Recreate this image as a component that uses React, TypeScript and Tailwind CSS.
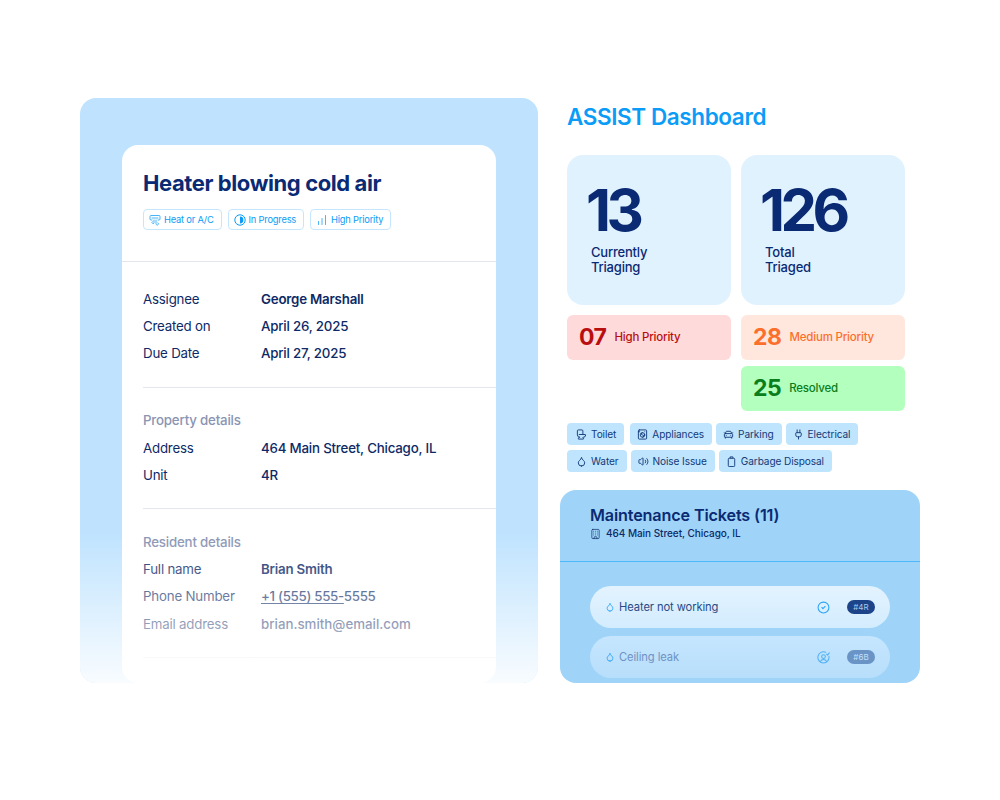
import { AirVent, Building, CarFront, ChartNoAxesColumnIncreasing, CircleCheck, Droplet, Plug, Toilet, Volume2, WashingMachine } from "lucide-react";
import type { ReactNode } from "react";

const font = { fontFamily: '"Inter", "Noto Sans", sans-serif' };

const HalfCircle = () => (
  <svg viewBox="0 0 12 12" className="h-[12px] w-[12px]" fill="none">
    <circle cx="6" cy="6" r="5.2" stroke="#0b9cf7" strokeWidth="1" />
    <path d="M6 2.6a3.4 3.4 0 0 1 0 6.8z" fill="#0b9cf7" />
  </svg>
);

const Bin = ({ className }: { className: string }) => (
  <svg viewBox="0 0 12 12" className={className} fill="none" stroke="currentColor" strokeWidth="1">
    <rect x="2.5" y="2.5" width="7" height="9" rx="1" />
    <path d="M4.5 2.5V1h3v1.5" />
  </svg>
);

const TargetUser = ({ className }: { className: string }) => (
  <svg viewBox="0 0 14 14" className={className} fill="none" stroke="currentColor" strokeWidth="1.1" strokeLinecap="round" strokeLinejoin="round">
    <path d="M9.4 1.4A6 6 0 1 0 12.8 5.6" />
    <circle cx="7" cy="6" r="2" />
    <path d="M3.6 11.4c.6-1.5 1.9-2.3 3.4-2.3s2.8.8 3.4 2.3" />
    <path d="M10.3 3.4l1.1 1 1.8-2.4" />
  </svg>
);

const Pill = ({ icon, label }: { icon: ReactNode; label: string }) => (
  <div className="flex h-[21px] items-center gap-[3px] rounded-[4px] border border-[#c6e6fd] bg-white pl-[5px] pr-[7px] text-[9.3px] tracking-[-0.2px] text-[#0b9cf7]">
    {icon}
    <span>{label}</span>
  </div>
);

const Row = ({ label, value, bold }: { label: string; value: ReactNode; bold?: boolean }) => (
  <div className="flex h-[27.3px] items-center text-[13.3px] tracking-[-0.2px] text-[#0d2a66]">
    <span className="w-[118px] shrink-0">{label}</span>
    <span className={bold ? "font-semibold" : "font-medium"}>{value}</span>
  </div>
);

const Stat = ({ num, line1, line2 }: { num: string; line1: string; line2: string }) => (
  <div className="h-[150px] w-[164px] rounded-[16px] bg-[#e1f2ff] pl-[19px] pt-[20px] text-[#0a2a73]">
    <div className="text-[58px] font-bold leading-[70px] tracking-[-4.5px]">{num}</div>
    <div className="ml-[5px] text-[13px] font-medium leading-[15px] tracking-[-0.2px]">
      {line1}
      <br />
      {line2}
    </div>
  </div>
);

const Tally = ({ num, label, cls, gap }: { num: string; label: string; cls: string; gap: string }) => (
  <div className={`flex h-[45px] w-[164px] items-center rounded-[6px] pl-[12px] ${cls}`}>
    <span className="text-[23px] font-bold tracking-[-0.5px]">{num}</span>
    <span className={`text-[11.5px] font-medium tracking-[-0.2px] ${gap}`}>{label}</span>
  </div>
);

const Tag = ({ icon, label, cls = "" }: { icon: ReactNode; label: string; cls?: string }) => (
  <div className={`flex h-[22px] items-center gap-[4px] rounded-[4px] bg-[#bfe4fd] pl-[7px] pr-[8px] text-[10.1px] tracking-[-0.1px] text-[#123a7a] ${cls}`}>
    {icon}
    <span className="translate-y-[0.5px]">{label}</span>
  </div>
);

const tagIcon = "h-[11px] w-[11px] text-[#123a7a]";

const Ticket = ({ title, badge, icon, cls, text, badgeCls }: { title: string; badge: string; icon: ReactNode; cls: string; text: string; badgeCls: string }) => (
  <div className={`flex h-[42px] items-center rounded-[21px] pl-[15px] pr-[15px] ${cls}`}>
    <Droplet className="h-[10px] w-[10px] text-[#2aa4f8]" />
    <span className={`ml-[4px] text-[11.2px] tracking-[-0.1px] ${text}`}>{title}</span>
    <span className="ml-auto flex">{icon}</span>
    <span className={`ml-[17px] flex h-[14px] w-[28px] items-center justify-center rounded-full text-[8px] ${badgeCls}`}>{badge}</span>
  </div>
);

export default function App() {
  return (
    <div className="flex h-[800px] w-[1000px] bg-white pl-[80px] pt-[98px]" style={font}>
      {/* left ticket detail */}
      <div className="relative h-[585px] w-[458px] overflow-hidden rounded-[16px] bg-[#bfe3fe] pl-[42px] pt-[47px]">
        <div className="h-full w-[374px] rounded-[16px] bg-white">
          <div className="h-[117px] border-b border-[#e3e6ef] pl-[21px] pt-[23px]">
            <h1 className="text-[22px] font-bold leading-[30px] tracking-[-0.4px] text-[#0a2a73]">Heater blowing cold air</h1>
            <div className="mt-[11px] flex gap-[6px]">
              <Pill icon={<AirVent className="h-[12px] w-[12px]" strokeWidth={1.5} />} label="Heat or A/C" />
              <Pill icon={<HalfCircle />} label="In Progress" />
              <Pill icon={<ChartNoAxesColumnIncreasing className="h-[12px] w-[12px]" strokeWidth={1.5} />} label="High Priority" />
            </div>
          </div>
          <div className="pl-[21px]">
            <div className="border-b border-[#e3e6ef] pb-[19px] pt-[24px]">
              <Row label="Assignee" value="George Marshall" bold />
              <Row label="Created on" value="April 26, 2025" />
              <Row label="Due Date" value="April 27, 2025" />
            </div>
            <div className="border-b border-[#e3e6ef] pb-[19px] pt-[20px]">
              <div className="flex h-[27px] items-center text-[13.3px] font-medium tracking-[-0.2px] text-[#8a94b3]">Property details</div>
              <Row label="Address" value="464 Main Street, Chicago, IL" />
              <Row label="Unit" value="4R" />
            </div>
            <div className="border-b border-[#e3e6ef] pb-[19px] pt-[20px]">
              <div className="flex h-[27px] items-center text-[13.3px] font-medium tracking-[-0.2px] text-[#8a94b3]">Resident details</div>
              <Row label="Full name" value="Brian Smith" bold />
              <Row label="Phone Number" value={<span className="tracking-[-0.3px]"><span className="underline underline-offset-2">+1 (555) 555-</span>5555</span>} />
              <Row label="Email address" value={<span className="tracking-normal">brian.smith@email.com</span>} />
            </div>
          </div>
        </div>
        <div className="absolute inset-x-0 bottom-0 h-[150px] bg-gradient-to-b from-white/0 to-white/90" />
      </div>

      {/* right dashboard */}
      <div className="ml-[22px] w-[360px]">
        <div className="pl-[7px]">
          <h2 className="flex h-[37px] items-center text-[22.5px] font-semibold tracking-[-0.4px] text-[#0b9cf7]">ASSIST Dashboard</h2>
          <div className="mt-[20px] flex gap-[10px]">
            <Stat num="13" line1="Currently" line2="Triaging" />
            <Stat num="126" line1="Total" line2="Triaged" />
          </div>
          <div className="mt-[10px] flex gap-[10px]">
            <Tally num="07" label="High Priority" cls="bg-[#ffdadb] text-[#b90e10]" gap="ml-[8px]" />
            <div className="flex flex-col gap-[6px]">
              <Tally num="28" label="Medium Priority" cls="bg-[#ffe7dd] text-[#fb6f2c]" gap="ml-[8px]" />
              <Tally num="25" label="Resolved" cls="bg-[#b2ffbe] text-[#0a7d1c]" gap="ml-[8px]" />
            </div>
          </div>
          <div className="mt-[12px] flex gap-[4px]">
            <Tag icon={<Toilet className={tagIcon} />} label="Toilet" cls="mr-[2px] pl-[9px]" />
            <Tag icon={<WashingMachine className={tagIcon} />} label="Appliances" />
            <Tag icon={<CarFront className={tagIcon} />} label="Parking" />
            <Tag icon={<Plug className={tagIcon} />} label="Electrical" />
          </div>
          <div className="mt-[5px] flex gap-[4px]">
            <Tag icon={<Droplet className={tagIcon} />} label="Water" cls="pl-[9px]" />
            <Tag icon={<Volume2 className={tagIcon} />} label="Noise Issue" />
            <Tag icon={<Bin className={tagIcon} />} label="Garbage Disposal" />
          </div>
        </div>
        <div className="mt-[18px] h-[193px] overflow-hidden rounded-[16px] bg-[#9fd4f8]">
          <div className="h-[72px] border-b border-[#4db8fb] pl-[30px] pt-[14px]">
            <div className="text-[16.2px] font-semibold leading-[22px] tracking-[-0.15px] text-[#0a2a73]">Maintenance Tickets (11)</div>
            <div className="flex items-center gap-[5px] text-[10px] font-medium leading-[15px] tracking-[-0.05px] text-[#0d2a66]">
              <Building className="h-[12px] w-[11px]" strokeWidth={1.5} />
              464 Main Street, Chicago, IL
            </div>
          </div>
          <div className="flex flex-col gap-[8px] px-[30px] pt-[24px]">
            <Ticket
              title="Heater not working"
              badge="#4R"
              icon={<CircleCheck className="h-[13px] w-[13px] text-[#2aa4f8]" />}
              cls="bg-gradient-to-b from-[#e3f3fe] to-[#d3ecfe]"
              text="text-[#2a4a85]"
              badgeCls="bg-[#1d4488] text-[#a9c8ec]"
            />
            <Ticket
              title="Ceiling leak"
              badge="#6B"
              icon={<TargetUser className="h-[13px] w-[13px] text-[#4fb0f5]" />}
              cls="bg-gradient-to-b from-[#c6e6fe] to-[#b7defb]"
              text="text-[#6f92c4]"
              badgeCls="bg-[#6a93c6] text-[#c6e0f8]"
            />
          </div>
        </div>
      </div>
    </div>
  );
}
